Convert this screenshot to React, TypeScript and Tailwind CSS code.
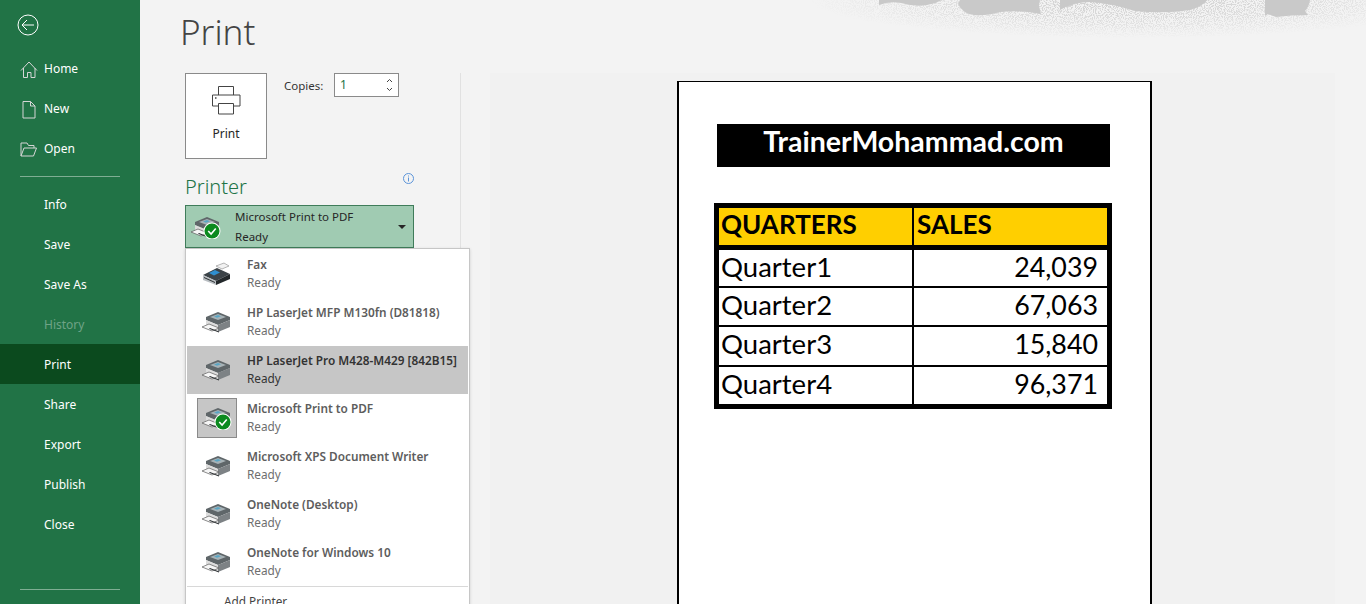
import React from "react";

const seg = "font-['Noto_Sans','Open_Sans',sans-serif]";
const calibri = "font-['Lato','Liberation_Sans',sans-serif]";

const CheckBadge = ({ x, y, r }: { x: number; y: number; r: number }) => (
  <g>
    <circle cx={x} cy={y} r={r + 1} fill="#fff" />
    <circle cx={x} cy={y} r={r} fill="#0b8a1f" />
    <path
      d={`M${x - r * 0.5} ${y}l${r * 0.38} ${r * 0.4} ${r * 0.62}-${r * 0.72}`}
      fill="none"
      stroke="#fff"
      strokeWidth="1.6"
    />
  </g>
);

// little 3D printer used in the printer list
const DevicePrinter = ({ check = false }: { check?: boolean }) => (
  <svg width="32" height="24" viewBox="0 0 32 24">
    <path d="M5 7l12-5 12 5v3l-12 5-12-5z" fill="#5f6669" />
    <path d="M9 7l8-3 8 3-8 3z" fill="#a7b2b6" />
    <path d="M13 6.5l4-1.5 3 1.2-4 1.5z" fill="#5ba6c4" />
    <path d="M5 10l12 5v7L5 17z" fill="#dcdcdc" />
    <path d="M17 15l12-5v7l-12 5z" fill="#7d8285" />
    <path d="M1 17l7-3 10 4-7 3z" fill="#f6f6f6" stroke="#5a5a5a" strokeWidth="0.7" />
    <path d="M9 18l9 3.5v1L8 18.8z" fill="#2c3033" />
    {check && <CheckBadge x={22} y={16} r={7.5} />}
  </svg>
);

const FaxIcon = () => (
  <svg width="32" height="24" viewBox="0 0 32 24">
    <path d="M15 4l8-3 5 3-7 3z" fill="#f2f2f2" stroke="#888" strokeWidth="0.6" />
    <path d="M2 13l14-7 13 6-14 7z" fill="#3c4348" />
    <path d="M8 11l6-3 5 2.4-6 3z" fill="#2f8fd0" />
    <path d="M2 13l13 6v4L2 18z" fill="#b9bec2" />
    <path d="M15 19l14-7v5l-14 6z" fill="#23282b" />
    <path d="M3 15l11 5v1L3 16z" fill="#2c3134" />
  </svg>
);

const printers = [
  { name: "Fax", kind: "fax" },
  { name: "HP LaserJet MFP M130fn (D81818)", kind: "plain" },
  { name: "HP LaserJet Pro M428-M429 [842B15]", kind: "hover" },
  { name: "Microsoft Print to PDF", kind: "selected" },
  { name: "Microsoft XPS Document Writer", kind: "plain" },
  { name: "OneNote (Desktop)", kind: "plain" },
  { name: "OneNote for Windows 10", kind: "plain" },
];

const navTop = [
  {
    label: "Home",
    icon: <path d="M1 10.5 9 2l8 8.5M3.5 8v9.5h4v-5h3.5v5h4V8" />,
  },
  { label: "New", icon: <path d="M3 1.5h7.5L15 6v12H3zM10.5 1.5V6H15" /> },
  {
    label: "Open",
    icon: <path d="M1 16V3h6l1.5 2.5H14V8M1 16l3-8h12.5l-3 8z" />,
  },
];

const navBottom = ["Info", "Save", "Save As", "History", "Print", "Share", "Export", "Publish", "Close"];

const rows = [
  { quarter: "Quarter1", sales: "24,039", height: "h-[38px]" },
  { quarter: "Quarter2", sales: "67,063", height: "h-[39px]" },
  { quarter: "Quarter3", sales: "15,840", height: "h-[40px]" },
  { quarter: "Quarter4", sales: "96,371", height: "h-[37px]" },
];

const Sidebar = () => (
  <aside className="flex h-full w-[140px] shrink-0 flex-col bg-[#217346] text-white">
    <div className="h-[48px] pl-[17px] pt-[14px]">
      <svg width="22" height="22" viewBox="0 0 22 22" fill="none" stroke="#fff" strokeWidth="1">
        <circle cx="11" cy="11" r="10" />
        <path d="M17 11H5.5M10 6l-5 5 5 5" />
      </svg>
    </div>
    <div className="mt-[1px] flex flex-col">
      {navTop.map((item) => (
        <div key={item.label} className="flex h-[40px] items-center pl-[20px] text-[12px]">
          <svg width="18" height="19" viewBox="0 0 18 19" fill="none" stroke="#d6d6d6" strokeWidth="1" className="mr-[6px]">
            {item.icon}
          </svg>
          {item.label}
        </div>
      ))}
    </div>
    <div className="mx-[20px] mt-[7px] h-px bg-[#7fae93]" />
    <div className="mt-[7px] flex flex-col">
      {navBottom.map((label) => (
        <div
          key={label}
          className={`flex h-[40px] items-center pl-[44px] pt-[2px] text-[12px] ${
            label === "Print" ? "bg-[#0b4a1e]" : ""
          } ${label === "History" ? "text-[#6fa386]" : ""}`}
        >
          {label}
        </div>
      ))}
    </div>
    <div className="mx-[20px] mt-[45px] h-px bg-[#7fae93]" />
  </aside>
);

const PrinterList = () => (
  <div className="absolute left-0 top-[43px] z-10 h-[400px] w-[285px] border border-[#c6c6c6] bg-white pl-px pt-px shadow-[0_1px_3px_rgba(0,0,0,0.15)]">
    {printers.map((p) => (
      <div
        key={p.name}
        className={`flex h-[48px] w-[281px] items-center ${p.kind === "hover" ? "bg-[#c6c6c6]" : ""}`}
      >
        <div className="flex w-[60px] shrink-0 items-center justify-center">
          {p.kind === "selected" ? (
            <div className="flex h-[40px] w-[40px] items-center justify-center border border-[#8a8a8a] bg-[#c6c6c6]">
              <DevicePrinter check />
            </div>
          ) : p.kind === "fax" ? (
            <FaxIcon />
          ) : (
            <DevicePrinter />
          )}
        </div>
        <div className="pb-[2px] leading-[18px]">
          <div className={`text-[11.8px] font-semibold ${p.kind === "hover" ? "text-[#333]" : "text-[#5d5d5d]"}`}>
            {p.name}
          </div>
          <div className={`text-[11.8px] ${p.kind === "hover" ? "text-[#333]" : "text-[#6e6e6e]"}`}>Ready</div>
        </div>
      </div>
    ))}
    <div className="h-px w-[281px] bg-[#d8d8d8]" />
    <div className="pl-[37px] pt-[6px] text-[11.8px] text-[#444]">Add Printer</div>
  </div>
);

const SettingsColumn = () => (
  <div className="h-full w-[321px] shrink-0 border-r border-[#e1e1e1] pl-[45px]">
    <div className="flex items-start">
      <div className="flex h-[86px] w-[82px] flex-col items-center border border-[#8a8a8a] bg-white pt-[12px]">
        <svg width="29" height="29" viewBox="0 0 29 29" fill="none" stroke="#444" strokeWidth="1">
          <path d="M6.5 9V.5h15V9M6.5 20H.5V9h27.5v11h-6.5" />
          <path d="M6.5 17.5h15v10.5h-15z" />
          <path d="M3 12h1.5" strokeWidth="1.5" />
        </svg>
        <span className="mt-[10px] text-[12px] leading-[18px] text-[#262626]">Print</span>
      </div>
      <span className="ml-[17px] mt-[4px] w-[42px] text-[11.5px] leading-[18px] text-[#333]">Copies:</span>
      <div className="ml-[8px] flex h-[24px] w-[65px] items-center justify-between border border-[#8a8a8a] bg-white pl-[5px] pr-[4px] text-[12px] text-[#217346]">
        1
        <svg width="9" height="16" viewBox="0 0 9 16" fill="none" stroke="#444" strokeWidth="1">
          <path d="M2 5l2.5-2.5L7 5M2 11l2.5 2.5L7 11" />
        </svg>
      </div>
    </div>
    <div className="mt-[14px] flex w-[229px] items-start justify-between">
      <span className="text-[20px] font-light leading-[28px] text-[#217346]">Printer</span>
      <svg width="11" height="11" viewBox="0 0 11 11" fill="none" stroke="#5a93d8">
        <circle cx="5.5" cy="5.5" r="5" />
        <path d="M5.5 4.5v4M5.5 2.5v1" />
      </svg>
    </div>
    <div className="relative mt-[4px] w-[229px]">
      <div className="flex h-[43px] w-[229px] items-center border border-[#3f7c5a] bg-[#a0cbb2] pl-[4px] pr-[7px]">
        <DevicePrinter check />
        <div className="ml-[13px] flex-1 text-[11.5px] leading-[20px] text-[#262626]">
          <div>Microsoft Print to PDF</div>
          <div>Ready</div>
        </div>
        <div className="h-0 w-0 border-x-[4px] border-t-[4px] border-x-transparent border-t-[#262626]" />
      </div>
      <PrinterList />
    </div>
  </div>
);

const PagePreview = () => (
  <div className="ml-[29px] h-full w-[845px] bg-[#f1f1f1] pl-[187px] pt-[8px]">
    <div className={`h-[560px] w-[475px] border-x-2 border-t border-black bg-white pl-[38px] pt-[42px] text-black ${calibri}`}>
      <div className="flex h-[43px] w-[393px] justify-center bg-black text-[28.5px] font-bold leading-[35px] text-white">
        TrainerMohammad.com
      </div>
      <div className="-ml-[3px] mt-[36px] w-[398px] border-[5px] border-black">
        <div className="flex h-[42px] border-b-[5px] border-black bg-[#ffcf00] text-[26px] font-bold leading-[32px]">
          <div className="w-[195px] border-r-2 border-black pl-[2px]">QUARTERS</div>
          <div className="pl-[3px]">SALES</div>
        </div>
        {rows.map((row, i) => (
          <div key={row.quarter} className={`flex ${row.height} leading-[34px] ${i < 3 ? "border-b-2 border-black" : ""}`}>
            <div className="w-[195px] border-r-2 border-black pl-[2px] text-[27.5px]">{row.quarter}</div>
            <div className="flex-1 pr-[9px] text-right text-[26.8px]">{row.sales}</div>
          </div>
        ))}
      </div>
    </div>
  </div>
);

// faint grey ink-brush decoration in the backstage top right corner
const BackstageArt = () => (
  <svg className="absolute right-0 top-0" width="566" height="40" viewBox="800 0 566 40">
    <defs>
      <filter id="speckle" x="0" y="0" width="100%" height="100%" colorInterpolationFilters="sRGB">
        <feTurbulence type="fractalNoise" baseFrequency="0.9" numOctaves="2" seed="4" />
        <feColorMatrix values="0 0 0 0 0.8  0 0 0 0 0.8  0 0 0 0 0.8  0 0 0 7 -3.2" />
      </filter>
      <radialGradient id="fade" gradientUnits="userSpaceOnUse" cx="0" cy="0" r="1" gradientTransform="translate(1130 0) scale(320 38)">
        <stop offset="0" stopColor="#fff" stopOpacity="1" />
        <stop offset="0.6" stopColor="#fff" stopOpacity="0.5" />
        <stop offset="1" stopColor="#fff" stopOpacity="0" />
      </radialGradient>
      <mask id="fadeMask" maskUnits="userSpaceOnUse" x="800" y="0" width="566" height="40">
        <rect x="800" y="0" width="566" height="40" fill="url(#fade)" />
      </mask>
    </defs>
    <g mask="url(#fadeMask)">
      <rect x="800" y="0" width="566" height="40" filter="url(#speckle)" />
    </g>
    <g fill="#c9c9c9">
      <path d="M879 0v5q10-4 22-2 14 4 26 2 8-1 15-5z" />
      <path d="M958 4q5 10 16 11 12 1 26-3 20-2 41 2l-2-8q0-4 1-6h-80z" />
      <path d="M1060 10q14-8 30-8 20 1 45 9 30 3 55-1 12-3 17-10h-147z" />
      <path d="M1265 0v16l3-2 8 3q15-2 32-2l-3-4q4-4 5-11z" />
    </g>
  </svg>
);

const App: React.FC = () => {
  return (
    <div className={`relative flex h-[604px] w-[1366px] overflow-hidden bg-[#f3f3f3] ${seg}`}>
      <Sidebar />
      <BackstageArt />
      <main className="flex min-w-0 flex-1 flex-col">
        <h1 className="h-[73px] pl-[40px] pt-[6px] text-[35px] font-light leading-[52px] text-[#444]">Print</h1>
        <div className="flex min-h-0 flex-1">
          <SettingsColumn />
          <PagePreview />
        </div>
      </main>
    </div>
  );
};

export default App;
